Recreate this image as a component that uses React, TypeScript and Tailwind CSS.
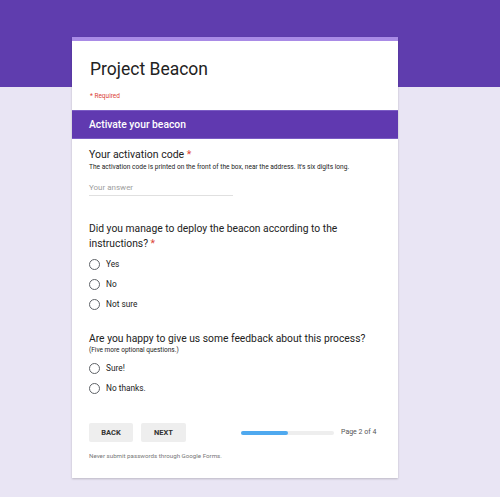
import React from "react";

const Radio = ({ label }: { label: string }) => (
  <div className="flex items-center h-[20px]">
    <span className="w-[11px] h-[11px] rounded-full border-[1.5px] border-[#5f6368] shrink-0" />
    <span className="ml-[6px] text-[8.3px] text-[#222]">{label}</span>
  </div>
);

const App = () => {
  return (
    <div
      className="w-[500px] h-[497px] overflow-hidden bg-[linear-gradient(#5f3dae_87px,#e9e5f4_87px)] pt-[37px] pl-[72px]"
      style={{ fontFamily: "Roboto, 'Liberation Sans', sans-serif" }}
    >
      <div className="w-[326px] h-[441px] bg-white border-t-[4px] border-[#a98be6] shadow-[0_1px_2px_rgba(0,0,0,0.2)]">
        <div className="pl-[18px] pt-[16px]">
          <h1 className="text-[17.5px] leading-[24px] text-[#222]">Project Beacon</h1>
          <p className="mt-[11px] text-[6.5px] leading-[8px] text-[#db4437]">* Required</p>
        </div>

        <div className="mt-[10px] h-[29px] bg-[#6039b0] border-y border-[#7b5cc4] flex items-center pl-[17px]">
          <span className="text-[10.3px] font-medium text-white">Activate your beacon</span>
        </div>

        <div className="pl-[17px] pr-[18px]">
          <div className="mt-[8px]">
            <p className="text-[10.5px] leading-[16px] text-[#222]">
              Your activation code <span className="text-[#db4437]">*</span>
            </p>
            <p className="text-[6.6px] leading-[8px] text-[#222]">
              The activation code is printed on the front of the box, near the address. It's six digits long.
            </p>
            <div className="mt-[12px] w-[144px] border-b border-[#e0e0e0] pb-[2px]">
              <span className="block text-[8px] leading-[10px] text-[#9e9e9e]">Your answer</span>
            </div>
          </div>

          <div className="mt-[25px]">
            <p className="text-[10.3px] leading-[15px] text-[#222] w-[270px]">
              Did you manage to deploy the beacon according to the instructions?{" "}
              <span className="text-[#db4437]">*</span>
            </p>
            <div className="mt-[3px]">
              <Radio label="Yes" />
              <Radio label="No" />
              <Radio label="Not sure" />
            </div>
          </div>

          <div className="mt-[17px]">
            <p className="text-[10.3px] leading-[15px] text-[#222]">
              Are you happy to give us some feedback about this process?
            </p>
            <p className="text-[6.5px] leading-[8px] text-[#222]">(Five more optional questions.)</p>
            <div className="mt-[4px]">
              <Radio label="Sure!" />
              <Radio label="No thanks." />
            </div>
          </div>

          <div className="mt-[25px] flex items-center">
            <button className="w-[44px] h-[19px] bg-[#eeeeee] rounded-[2px] text-[7.5px] font-bold text-[#333]">
              BACK
            </button>
            <button className="ml-[8px] w-[45px] h-[19px] bg-[#eeeeee] rounded-[2px] text-[7.5px] font-bold text-[#333]">
              NEXT
            </button>
            <div className="ml-[55px] w-[93px] h-[4px] rounded-full bg-[#eeeeee]">
              <div className="w-[47px] h-full rounded-full bg-[#4fa9ef]" />
            </div>
            <span className="ml-[7px] text-[7px] text-[#555]">Page 2 of 4</span>
          </div>

          <p className="mt-[10px] text-[6.2px] leading-[8px] text-[#777]">Never submit passwords through Google Forms.</p>
        </div>
      </div>
    </div>
  );
};

export default App;
